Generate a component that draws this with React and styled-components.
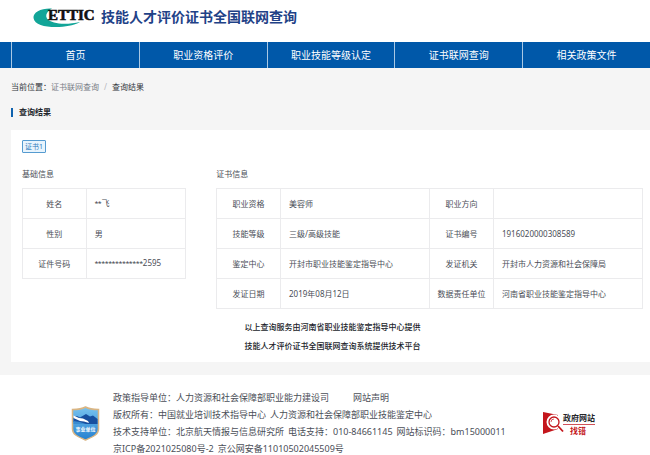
import React from "react";
import styled, { createGlobalStyle } from "styled-components";

const GlobalStyle = createGlobalStyle`
  * {
    box-sizing: border-box;
  }

  body {
    margin: 0;
    background: #fff;
    color: #4a4e57;
    font-family: "Noto Sans", "Noto Sans CJK SC", sans-serif;
    font-size: 8px;
    line-height: 12px;
  }

  a {
    color: inherit;
    text-decoration: none;
  }
`;

const Header = styled.header`
  display: flex;
  align-items: center;
  gap: 5px;
  height: 42px;
  padding: 0 32px 9px;
`;

const SiteTitle = styled.h1`
  margin: 0;
  color: #1f4287;
  font-size: 14px;
  line-height: 20px;
  font-weight: 700;
`;

const Nav = styled.nav`
  display: grid;
  grid-template-columns: repeat(5, 1fr);
  padding-left: 11px;
  background: #0058a9;
`;

const NavLink = styled.a`
  border-left: 1px solid #a9c8e4;
  color: #fff;
  font-size: 10px;
  line-height: 26px;
  text-align: center;
`;

const Main = styled.main`
  padding: 13px 0 13px 11px;
  background: #f5f5f5;
`;

const Breadcrumb = styled.nav`
  display: flex;
  color: #33363d;
`;

const Crumb = styled.a`
  color: #777c85;
`;

const Separator = styled.span`
  padding: 0 5px;
  color: #b5b8bd;
`;

const PageTitle = styled.h2`
  display: flex;
  align-items: center;
  gap: 6px;
  margin: 13px 0 12px;
  color: #22252b;
  font-size: 8px;
  line-height: 12px;

  &::before {
    content: "";
    width: 2px;
    height: 9px;
    background: #0f62ae;
  }
`;

const Panel = styled.section`
  padding: 10px 7px 7px 11px;
  background: #fff;
`;

const Tag = styled.button`
  display: block;
  height: 13px;
  padding: 0 2px;
  border: 1px solid #559bd0;
  border-radius: 1px;
  background: #e8f4fd;
  color: #2f7dbc;
  font: inherit;
  font-size: 7px;
  line-height: 11px;
`;

const Tables = styled.div`
  display: grid;
  grid-template-columns: minmax(0, 5fr) minmax(0, 13fr);
  align-items: start;
  gap: 30px;
  margin-top: 15px;
`;

const SectionTitle = styled.h3`
  margin: 0 0 8px;
  font-size: 8px;
  line-height: 12px;
  font-weight: 400;
`;

const Table = styled.table`
  width: 100%;
  table-layout: fixed;
  border-collapse: collapse;
`;

const Label = styled.th`
  width: ${props => props.$width};
  height: 30px;
  padding: 0;
  border: 1px solid #ebebed;
  font-weight: 400;
  text-align: center;
`;

const Value = styled.td`
  height: 30px;
  padding: 0 8px;
  border: 1px solid #ebebed;
  white-space: nowrap;
`;

const Mask = styled.span`
  font-family: Roboto, sans-serif;
`;

const Notice = styled.div`
  margin-top: 8px;
  color: #202329;
  font-weight: 500;
  line-height: 19px;
  text-align: center;

  p {
    margin: 0;
  }
`;

const Footer = styled.footer`
  display: flex;
  align-items: center;
  gap: 13px;
  padding: 14px 54px 0 71px;
  font-size: 9px;
  line-height: 17px;
`;

const FooterText = styled.div`
  flex: 1;
`;

const FooterLine = styled.div`
  display: flex;
  gap: ${props => (props.$wide ? "24px" : "4px")};
  white-space: nowrap;
`;

const navItems = [
  "首页",
  "职业资格评价",
  "职业技能等级认定",
  "证书联网查询",
  "相关政策文件"
];

const basicInfo = [
  { label: "姓名", mask: "**", value: "飞" },
  { label: "性别", value: "男" },
  { label: "证件号码", mask: "**************", value: "2595" }
];

const certInfo = [
  ["职业资格", "美容师", "职业方向", ""],
  ["技能等级", "三级/高级技能", "证书编号", "1916020000308589"],
  ["鉴定中心", "开封市职业技能鉴定指导中心", "发证机关", "开封市人力资源和社会保障局"],
  ["发证日期", "2019年08月12日", "数据责任单位", "河南省职业技能鉴定指导中心"]
];

const EtticLogo = () => (
  <svg width="64" height="24" viewBox="0 0 64 24" role="img" aria-label="ETTIC">
    <path
      d="M20 3.500C9 3 1 7 1.500 13C2.500 20 14 22.500 27 22C37 21.500 44 19.500 48 17C39 19 29 19.500 22 17.500C12 15 12 8 20 3.500Z"
      fill="#12a598"
    />
    <text
      x="16"
      y="15"
      fill="#111"
      stroke="#111"
      strokeWidth="0.6"
      fontFamily="Liberation Serif, serif"
      fontSize="15"
      fontWeight="700"
    >
      ETTIC
    </text>
  </svg>
);

const ShieldLogo = () => (
  <svg width="29" height="35" viewBox="0 0 29 35">
    <defs>
      <linearGradient id="shield" x1="0" y1="0" x2="0" y2="1">
        <stop offset="0" stopColor="#79c3ef" />
        <stop offset="1" stopColor="#2480d0" />
      </linearGradient>
    </defs>
    <path
      d="M14.500 1C18 3 23 3.500 27.500 3.500V23C27.500 29 21 31 14.500 34C8 31 1.500 29 1.500 23V3.500C6 3.500 11 3 14.500 1Z"
      fill="url(#shield)"
      stroke="#d9b583"
      strokeWidth="1.500"
    />
    <path d="M2.500 16V11L6 10L9 11.500L15 8L19 10.500L22 9.500L26.500 13V18H12Z" fill="#174f9f" />
    <path
      d="M2.500 9.500L8 12L12 12.500L17 15L18 17L13 15.500L9 15L2.500 12Z"
      fill="#fff"
    />
    <path d="M2.500 15L9 16L15 18H2.500Z" fill="#398bd0" />
    <text x="14.500" y="25" fill="#fff" fontSize="5" fontWeight="700" textAnchor="middle">
      事业单位
    </text>
  </svg>
);

const ReportLogo = () => (
  <svg width="53" height="25" viewBox="0 0 53 25">
    <path d="M0 1L15 4V18L0 23Z" fill="#c4161c" />
    <circle cx="11" cy="11" r="6" fill="#c4161c" stroke="#fff" strokeWidth="3" />
    <circle cx="11" cy="11" r="5" fill="#fff" stroke="#c4161c" strokeWidth="1.300" />
    <path d="M8 11A3 3 0 0 1 11 8" fill="none" stroke="#c4161c" strokeWidth="0.700" />
    <path d="M15 15L20 20.500" stroke="#c4161c" strokeWidth="1.800" />
    <text x="20" y="10" fill="#26262a" fontSize="8" fontWeight="700">
      政府网站
    </text>
    <path d="M20 13.500H52" stroke="#d0525a" strokeWidth="1" />
    <text x="27" y="23" fill="#c4161c" fontSize="8" fontWeight="700">
      找错
    </text>
  </svg>
);

const App = () => (
  <>
    <GlobalStyle />
    <Header>
      <EtticLogo />
      <SiteTitle>技能人才评价证书全国联网查询</SiteTitle>
    </Header>
    <Nav>
      {navItems.map(item => (
        <NavLink href="#" key={item}>
          {item}
        </NavLink>
      ))}
    </Nav>
    <Main>
      <Breadcrumb>
        <span>当前位置：</span>
        <Crumb href="#">证书联网查询</Crumb>
        <Separator>/</Separator>
        <span>查询结果</span>
      </Breadcrumb>
      <PageTitle>查询结果</PageTitle>
      <Panel>
        <Tag type="button">证书1</Tag>
        <Tables>
          <div>
            <SectionTitle id="basic">基础信息</SectionTitle>
            <Table aria-labelledby="basic">
              <tbody>
                {basicInfo.map(({ label, mask, value }) => (
                  <tr key={label}>
                    <Label scope="row" $width="39%">
                      {label}
                    </Label>
                    <Value>
                      {mask && <Mask>{mask}</Mask>}
                      {value}
                    </Value>
                  </tr>
                ))}
              </tbody>
            </Table>
          </div>
          <div>
            <SectionTitle id="cert">证书信息</SectionTitle>
            <Table aria-labelledby="cert">
              <tbody>
                {certInfo.map(([label, value, otherLabel, otherValue]) => (
                  <tr key={label}>
                    <Label scope="row" $width="15%">
                      {label}
                    </Label>
                    <Value>{value}</Value>
                    <Label scope="row" $width="15%">
                      {otherLabel}
                    </Label>
                    <Value>{otherValue}</Value>
                  </tr>
                ))}
              </tbody>
            </Table>
          </div>
        </Tables>
        <Notice>
          <p>以上查询服务由河南省职业技能鉴定指导中心提供</p>
          <p>技能人才评价证书全国联网查询系统提供技术平台</p>
        </Notice>
      </Panel>
    </Main>
    <Footer>
      <ShieldLogo />
      <FooterText>
        <FooterLine $wide>
          <span>政策指导单位：人力资源和社会保障部职业能力建设司</span>
          <a href="#">网站声明</a>
        </FooterLine>
        <FooterLine>
          <span>版权所有：中国就业培训技术指导中心</span>
          <span>人力资源和社会保障部职业技能鉴定中心</span>
        </FooterLine>
        <FooterLine>
          <span>技术支持单位：北京航天情报与信息研究所</span>
          <span>电话支持：010-84661145</span>
          <span>网站标识码：bm15000011</span>
        </FooterLine>
        <FooterLine>
          <a href="#">京ICP备2021025080号-2</a>
          <a href="#">京公网安备11010502045509号</a>
        </FooterLine>
      </FooterText>
      <ReportLogo />
    </Footer>
  </>
);

export default App;
